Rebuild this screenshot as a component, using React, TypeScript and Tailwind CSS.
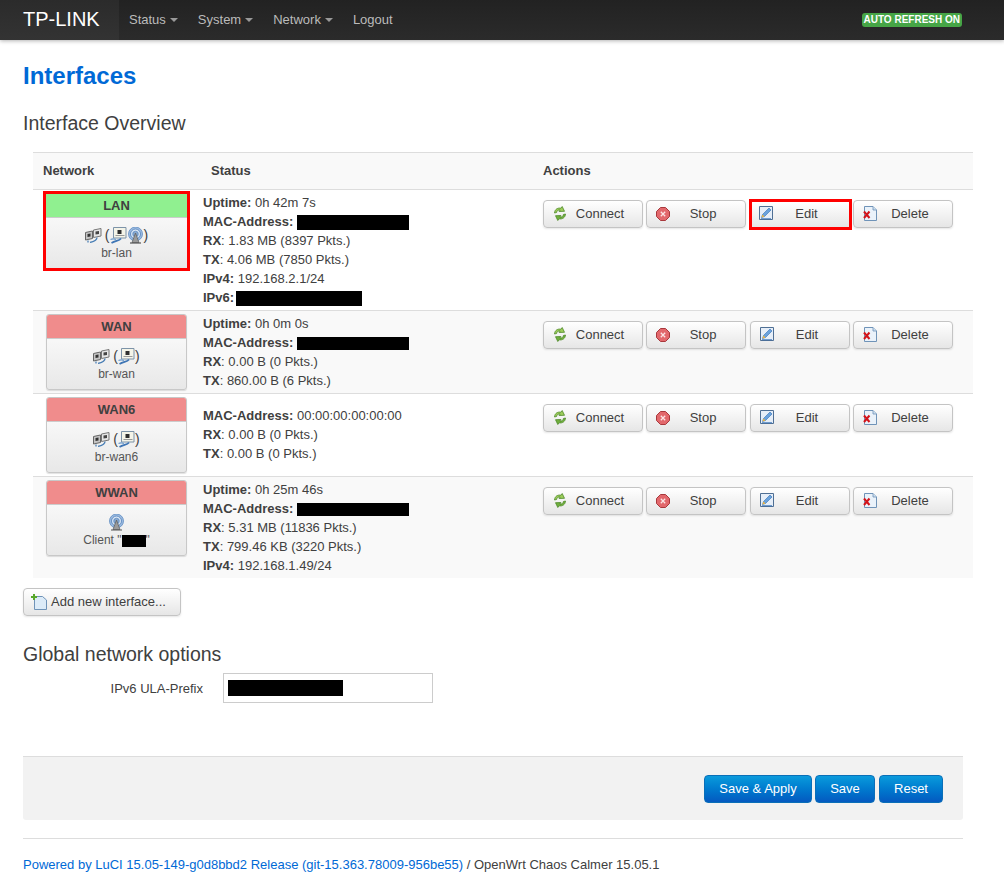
const EthIcon = () => (
  <svg width="17" height="15" viewBox="0 0 17 15" className="mr-[3px] inline-block">
    <path d="M.5 4.500l7-1.500v7.500l-7 1.500z" fill="#c4c4c4" stroke="#666" strokeWidth="1" />
    <path d="M2.500 6l3-.6v3l-3 .6z" fill="#333" />
    <path d="M8.500 2l7.500-1.500v7.500l-7.500 1.500z" fill="#e6e6e6" stroke="#777" strokeWidth="1" />
    <path d="M10.500 3.500l3.500-.6v3l-3.500.6z" fill="#444" />
    <path d="M3 12.500v2M12 9.500c0 3-3 4-7 5" fill="none" stroke="#4a7fb5" strokeWidth="1.300" />
  </svg>
);

const BridgeIcon = () => (
  <svg width="17" height="18" viewBox="0 0 17 18" className="inline-block">
    <path d="M3.500 1.500h12.500v10.500H3.500z" fill="#f4f4e8" stroke="#7d93a8" strokeWidth="1" />
    <path d="M7.500 4h4v4h-4z" fill="#2e2e2e" />
    <path d="M5.500 9.500h9" stroke="#999" strokeWidth="1" />
    <path d="M11 12.500c-2 2.500-5 2-9.500 4.500" fill="none" stroke="#3f76b5" strokeWidth="1.800" />
    <path d="M.5 13.500c2-1 3.500-1 5.500 0" fill="none" stroke="#6e9ccc" strokeWidth="1.200" />
  </svg>
);

const WifiIcon = () => (
  <svg width="17" height="17" viewBox="0 0 17 17" className="inline-block">
    <circle cx="8.500" cy="7" r="7" fill="#9dbce2" stroke="#5e8cc0" strokeWidth="0.800" />
    <circle cx="8.500" cy="7" r="5" fill="#d6e4f4" stroke="#4f7fb8" strokeWidth="0.800" />
    <circle cx="8.500" cy="7" r="2.800" fill="#87a8cf" stroke="#4f7fb8" strokeWidth="0.600" />
    <path d="M8.500 6l-3.500 9.500h7z" fill="#9a9a9a" stroke="#5c5c5c" strokeWidth="0.700" />
    <path d="M3 16h11" stroke="#555" strokeWidth="1.200" />
  </svg>
);

const ConnectIcon = () => (
  <svg width="14" height="15" viewBox="0 0 14 15">
    <path d="M1.500 7c.2-3.500 3-5.500 6.500-4.800l1.200-1.700 2.300 4.800-5.400.2 1.100-1.500c-1.800-.4-3.300.5-3.600 2.500z" fill="#9ccc5a" stroke="#4f8a2a" strokeWidth="0.800" />
    <path d="M12.500 8c-.2 3.500-3 5.500-6.500 4.800l-1.200 1.700-2.300-4.800 5.400-.2-1.100 1.500c1.800.4 3.300-.5 3.600-2.500z" fill="#6fae3c" stroke="#4f8a2a" strokeWidth="0.800" />
  </svg>
);

const StopIcon = () => (
  <svg width="14" height="14" viewBox="0 0 14 14">
    <path d="M4.500.5h5l4 4v5l-4 4h-5l-4-4v-5z" fill="#e2686c" stroke="#a8383c" strokeWidth="1" />
    <path d="M4.800 4.800l4.400 4.400M9.200 4.800l-4.400 4.400" stroke="#fbe4e4" strokeWidth="1.300" />
  </svg>
);

const EditIcon = () => (
  <svg width="15" height="15" viewBox="0 0 15 15">
    <path d="M.5.5h13v13H.5z" fill="#e6eef8" stroke="#4f6f94" strokeWidth="1" />
    <path d="M2.500 11.500l1-3 6.500-6.500 2 2-6.500 6.500z" fill="#6aa2dc" stroke="#2f6fb5" strokeWidth="0.600" />
    <path d="M2.500 11.500l1-3 2 2z" fill="#f0b43c" />
    <path d="M2 12.700h10" stroke="#2f6fb5" strokeWidth="0.800" />
  </svg>
);

const DeleteIcon = () => (
  <svg width="14" height="15" viewBox="0 0 14 15">
    <path d="M1.500.5h8.500l3.500 3.500v10.500h-12z" fill="#eaf2fa" stroke="#6f93b8" strokeWidth="1" />
    <path d="M10 .5v3.500h3.500" fill="#cfe0f0" stroke="#6f93b8" strokeWidth="0.800" />
    <path d="M1 5.500l5.500 6.500M6.500 5.500l-5.500 6.500" stroke="#d3141a" strokeWidth="2" />
  </svg>
);

const AddIcon = () => (
  <svg width="16" height="16" viewBox="0 0 16 16">
    <path d="M3.500 2.500h8l4 3.500v9.500h-12z" fill="#dcebf8" stroke="#6f93b8" strokeWidth="1" />
    <path d="M3 0v6M0 3h6" stroke="#58a82c" strokeWidth="2" />
  </svg>
);

const Redact = ({ className }: { className: string }) => <span className={`inline-block bg-black align-middle ${className}`} />;

function ActionButton(props: { icon: React.ReactNode; label: string; outlined?: boolean; edit?: boolean }) {
  const { icon, label, outlined, edit } = props;
  return (
    <button
      className={`flex items-center bg-gradient-to-b from-white to-[#e6e6e6] text-[#404040] ${
        outlined
          ? "-mt-[1px] -mr-[2px] h-[31px] w-[103px] border-[3px] border-[#f00] pb-[2px] pl-[6px]"
          : `h-[28px] w-[100px] rounded-[4px] border border-[#c4c4c4] pb-[1px] pl-[8px] shadow-[0_1px_2px_rgba(0,0,0,0.1)] ${edit ? "ml-[1px]" : ""}`
      }`}
    >
      <span className="flex w-[16px] justify-center">{icon}</span>
      <span className="flex-1 pr-[16px] pl-[6px] text-center">{label}</span>
    </button>
  );
}

function NetworkBox(props: { name: string; color: string; icons: React.ReactNode; label: React.ReactNode; outlined?: boolean; }) {
  const { name, color, icons, label, outlined } = props;
  return (
    <div
      className={`ml-[13px] w-[141px] overflow-hidden bg-gradient-to-b from-white to-[#e8e8e8] text-center ${outlined ? "mt-[1px] outline-[3px] outline-[#f00]" : "rounded-[3px] border border-[#c8c8c8] shadow-[0_1px_1px_rgba(0,0,0,0.12)]"}`}
    >
      <div className={`h-[24px] border-b border-[#ccc] leading-[23px] font-bold text-[#404040] ${color}`}>{name}</div>
      <div className="flex h-[50px] flex-col items-center justify-start pt-[8px]">
        <div className="flex h-[18px] items-center text-[14px] leading-[18px] text-[#404040]">{icons}</div>
        <div className="mt-[1px] text-[12px] leading-[16px] text-[#555]">{label}</div>
      </div>
    </div>
  );
}

function Stat(props: { k: string; plainColon?: boolean; children: React.ReactNode }) {
  const { k, plainColon, children } = props;
  return (
    <div>
      {plainColon ? <><b>{k}</b>:</> : <b>{k}:</b>} {children}
    </div>
  );
}

const red = "bg-[#f08c8c]";

const rows = [
  {
    key: "lan",
    bg: "bg-white",
    statsClass: "py-[3px]",
    box: (
      <NetworkBox
        outlined
        name="LAN"
        color="bg-[#90f090]"
        icons={<><EthIcon /><span>(</span><BridgeIcon /><WifiIcon /><span>)</span></>}
        label="br-lan"
      />
    ),
    stats: (
      <>
        <Stat k="Uptime">0h 42m 7s</Stat>
        <Stat k="MAC-Address"><Redact className="h-[15px] w-[112px]" /></Stat>
        <Stat k="RX" plainColon>1.83 MB (8397 Pkts.)</Stat>
        <Stat k="TX" plainColon>4.06 MB (7850 Pkts.)</Stat>
        <Stat k="IPv4">192.168.2.1/24</Stat>
        <Stat k="IPv6"><Redact className="-ml-[2px] h-[15px] w-[126px]" /></Stat>
      </>
    ),
    editOutlined: true,
  },
  {
    key: "wan",
    bg: "bg-[#f9f9f9]",
    statsClass: "py-[3px]",
    box: (
      <NetworkBox
        name="WAN"
        color={red}
        icons={<><EthIcon /><span>(</span><BridgeIcon /><span>)</span></>}
        label="br-wan"
      />
    ),
    stats: (
      <>
        <Stat k="Uptime">0h 0m 0s</Stat>
        <Stat k="MAC-Address"><Redact className="h-[13px] w-[112px]" /></Stat>
        <Stat k="RX" plainColon>0.00 B (0 Pkts.)</Stat>
        <Stat k="TX" plainColon>860.00 B (6 Pkts.)</Stat>
      </>
    ),
  },
  {
    key: "wan6",
    bg: "bg-white",
    statsClass: "pb-[5px] pt-[3px]",
    box: (
      <NetworkBox
        name="WAN6"
        color={red}
        icons={<><EthIcon /><span>(</span><BridgeIcon /><span>)</span></>}
        label="br-wan6"
      />
    ),
    stats: (
      <>
        <Stat k="MAC-Address">00:00:00:00:00:00</Stat>
        <Stat k="RX" plainColon>0.00 B (0 Pkts.)</Stat>
        <Stat k="TX" plainColon>0.00 B (0 Pkts.)</Stat>
      </>
    ),
  },
  {
    key: "wwan",
    bg: "bg-[#f9f9f9]",
    statsClass: "py-[3px]",
    box: (
      <NetworkBox
        name="WWAN"
        color={red}
        icons={<WifiIcon />}
        label={<>Client "<Redact className="h-[12px] w-[24px]" />"</>}
      />
    ),
    stats: (
      <>
        <Stat k="Uptime">0h 25m 46s</Stat>
        <Stat k="MAC-Address"><Redact className="h-[13px] w-[112px]" /></Stat>
        <Stat k="RX" plainColon>5.31 MB (11836 Pkts.)</Stat>
        <Stat k="TX" plainColon>799.46 KB (3220 Pkts.)</Stat>
        <Stat k="IPv4">192.168.1.49/24</Stat>
      </>
    ),
  },
];

export default function App() {
  return (
    <div className="min-h-[887px] bg-white font-['Liberation_Sans',Arial,sans-serif] text-[13px] leading-[19px] text-[#404040]">
      <header className="flex h-[40px] items-stretch bg-gradient-to-b from-[#222] to-[#2b2b2b] shadow-[0_1px_4px_rgba(0,0,0,0.3)]">
        <div className="w-[119px] bg-gradient-to-b from-[#2b2b2b] to-[#333] pl-[23px] text-[20px] leading-[38px] text-white">TP-LINK</div>
        <nav className="flex items-center pb-[1px] pl-[10px] text-[#bbb]">
          {["Status", "System", "Network"].map((n) => (
            <span key={n} className="flex items-center pr-[20px]">
              {n}
              <span className="ml-[4px] h-0 w-0 border-x-[4px] border-t-[4px] border-x-transparent border-t-[#999]" />
            </span>
          ))}
          <span>Logout</span>
        </nav>
        <div className="mr-[42px] ml-auto flex items-center">
          <span className="rounded-[3px] bg-[#46a546] px-[2px] text-[10px] leading-[14px] font-bold text-white">AUTO REFRESH ON</span>
        </div>
      </header>

      <main className="ml-[23px] w-[940px]">
        <h2 className="pt-[22px] text-[24px] leading-[28px] font-bold text-[#0069d6]">Interfaces</h2>
        <h3 className="mt-[19px] text-[19.5px] leading-[28px] text-[#404040]">Interface Overview</h3>

        <section className="mt-[15px] ml-[10px] w-[940px]">
          <div className="flex h-[38px] items-center border-t border-b border-[#ddd] bg-[#f9f9f9] pb-[2px] font-bold">
            <div className="w-[178px] pl-[10px]">Network</div>
            <div className="w-[332px]">Status</div>
            <div>Actions</div>
          </div>
          {rows.map((r) => (
            <div key={r.key} className={`flex border-b border-[#ddd] last:border-b-0 ${r.bg}`}>
              <div className="w-[160px] py-[3px]">{r.box}</div>
              <div className={`w-[350px] self-center pl-[10px] ${r.statsClass}`}>{r.stats}</div>
              <div className="flex items-start gap-[3px] pt-[10px]">
                <ActionButton icon={<ConnectIcon />} label="Connect" />
                <ActionButton icon={<StopIcon />} label="Stop" />
                <ActionButton icon={<EditIcon />} label="Edit" edit outlined={r.editOutlined} />
                <ActionButton icon={<DeleteIcon />} label="Delete" />
              </div>
            </div>
          ))}
        </section>

        <button className="mt-[10px] flex h-[28px] w-[158px] items-center gap-[4px] rounded-[4px] border border-[#c4c4c4] bg-gradient-to-b from-white to-[#e6e6e6] pb-[1px] pl-[7px] shadow-[0_1px_2px_rgba(0,0,0,0.1)]">
          <AddIcon />
          Add new interface...
        </button>

        <h3 className="mt-[24px] text-[19.5px] leading-[28px]">Global network options</h3>
        <div className="mt-[5px] flex items-center">
          <label className="w-[180px] text-right">IPv6 ULA-Prefix</label>
          <div className="ml-[20px] flex h-[30px] w-[210px] items-center border border-[#ccc] bg-white pl-[4px]">
            <Redact className="h-[16px] w-[115px]" />
          </div>
        </div>

        <div className="mt-[53px] flex h-[64px] items-center justify-end rounded-b-[3px] border-t border-[#ddd] bg-[#f2f2f2] pr-[20px]">
          {[
            { label: "Save & Apply", w: "w-[108px] mr-[3px]" },
            { label: "Save", w: "w-[60px] mr-[4px]" },
            { label: "Reset", w: "w-[64px]" },
          ].map((b) => (
            <button key={b.label} className={`h-[28px] rounded-[4px] border border-[#0a6fb8] bg-gradient-to-b from-[#0c9bdc] to-[#0559c0] pb-[1px] text-white ${b.w}`}>
              {b.label}
            </button>
          ))}
        </div>

        <footer className="mt-[18px] border-t border-[#ddd] pt-[16px]">
          <span className="text-[#0069d6]">Powered by LuCI 15.05-149-g0d8bbd2 Release (git-15.363.78009-956be55)</span> / OpenWrt Chaos Calmer 15.05.1
        </footer>
      </main>
    </div>
  );
}
